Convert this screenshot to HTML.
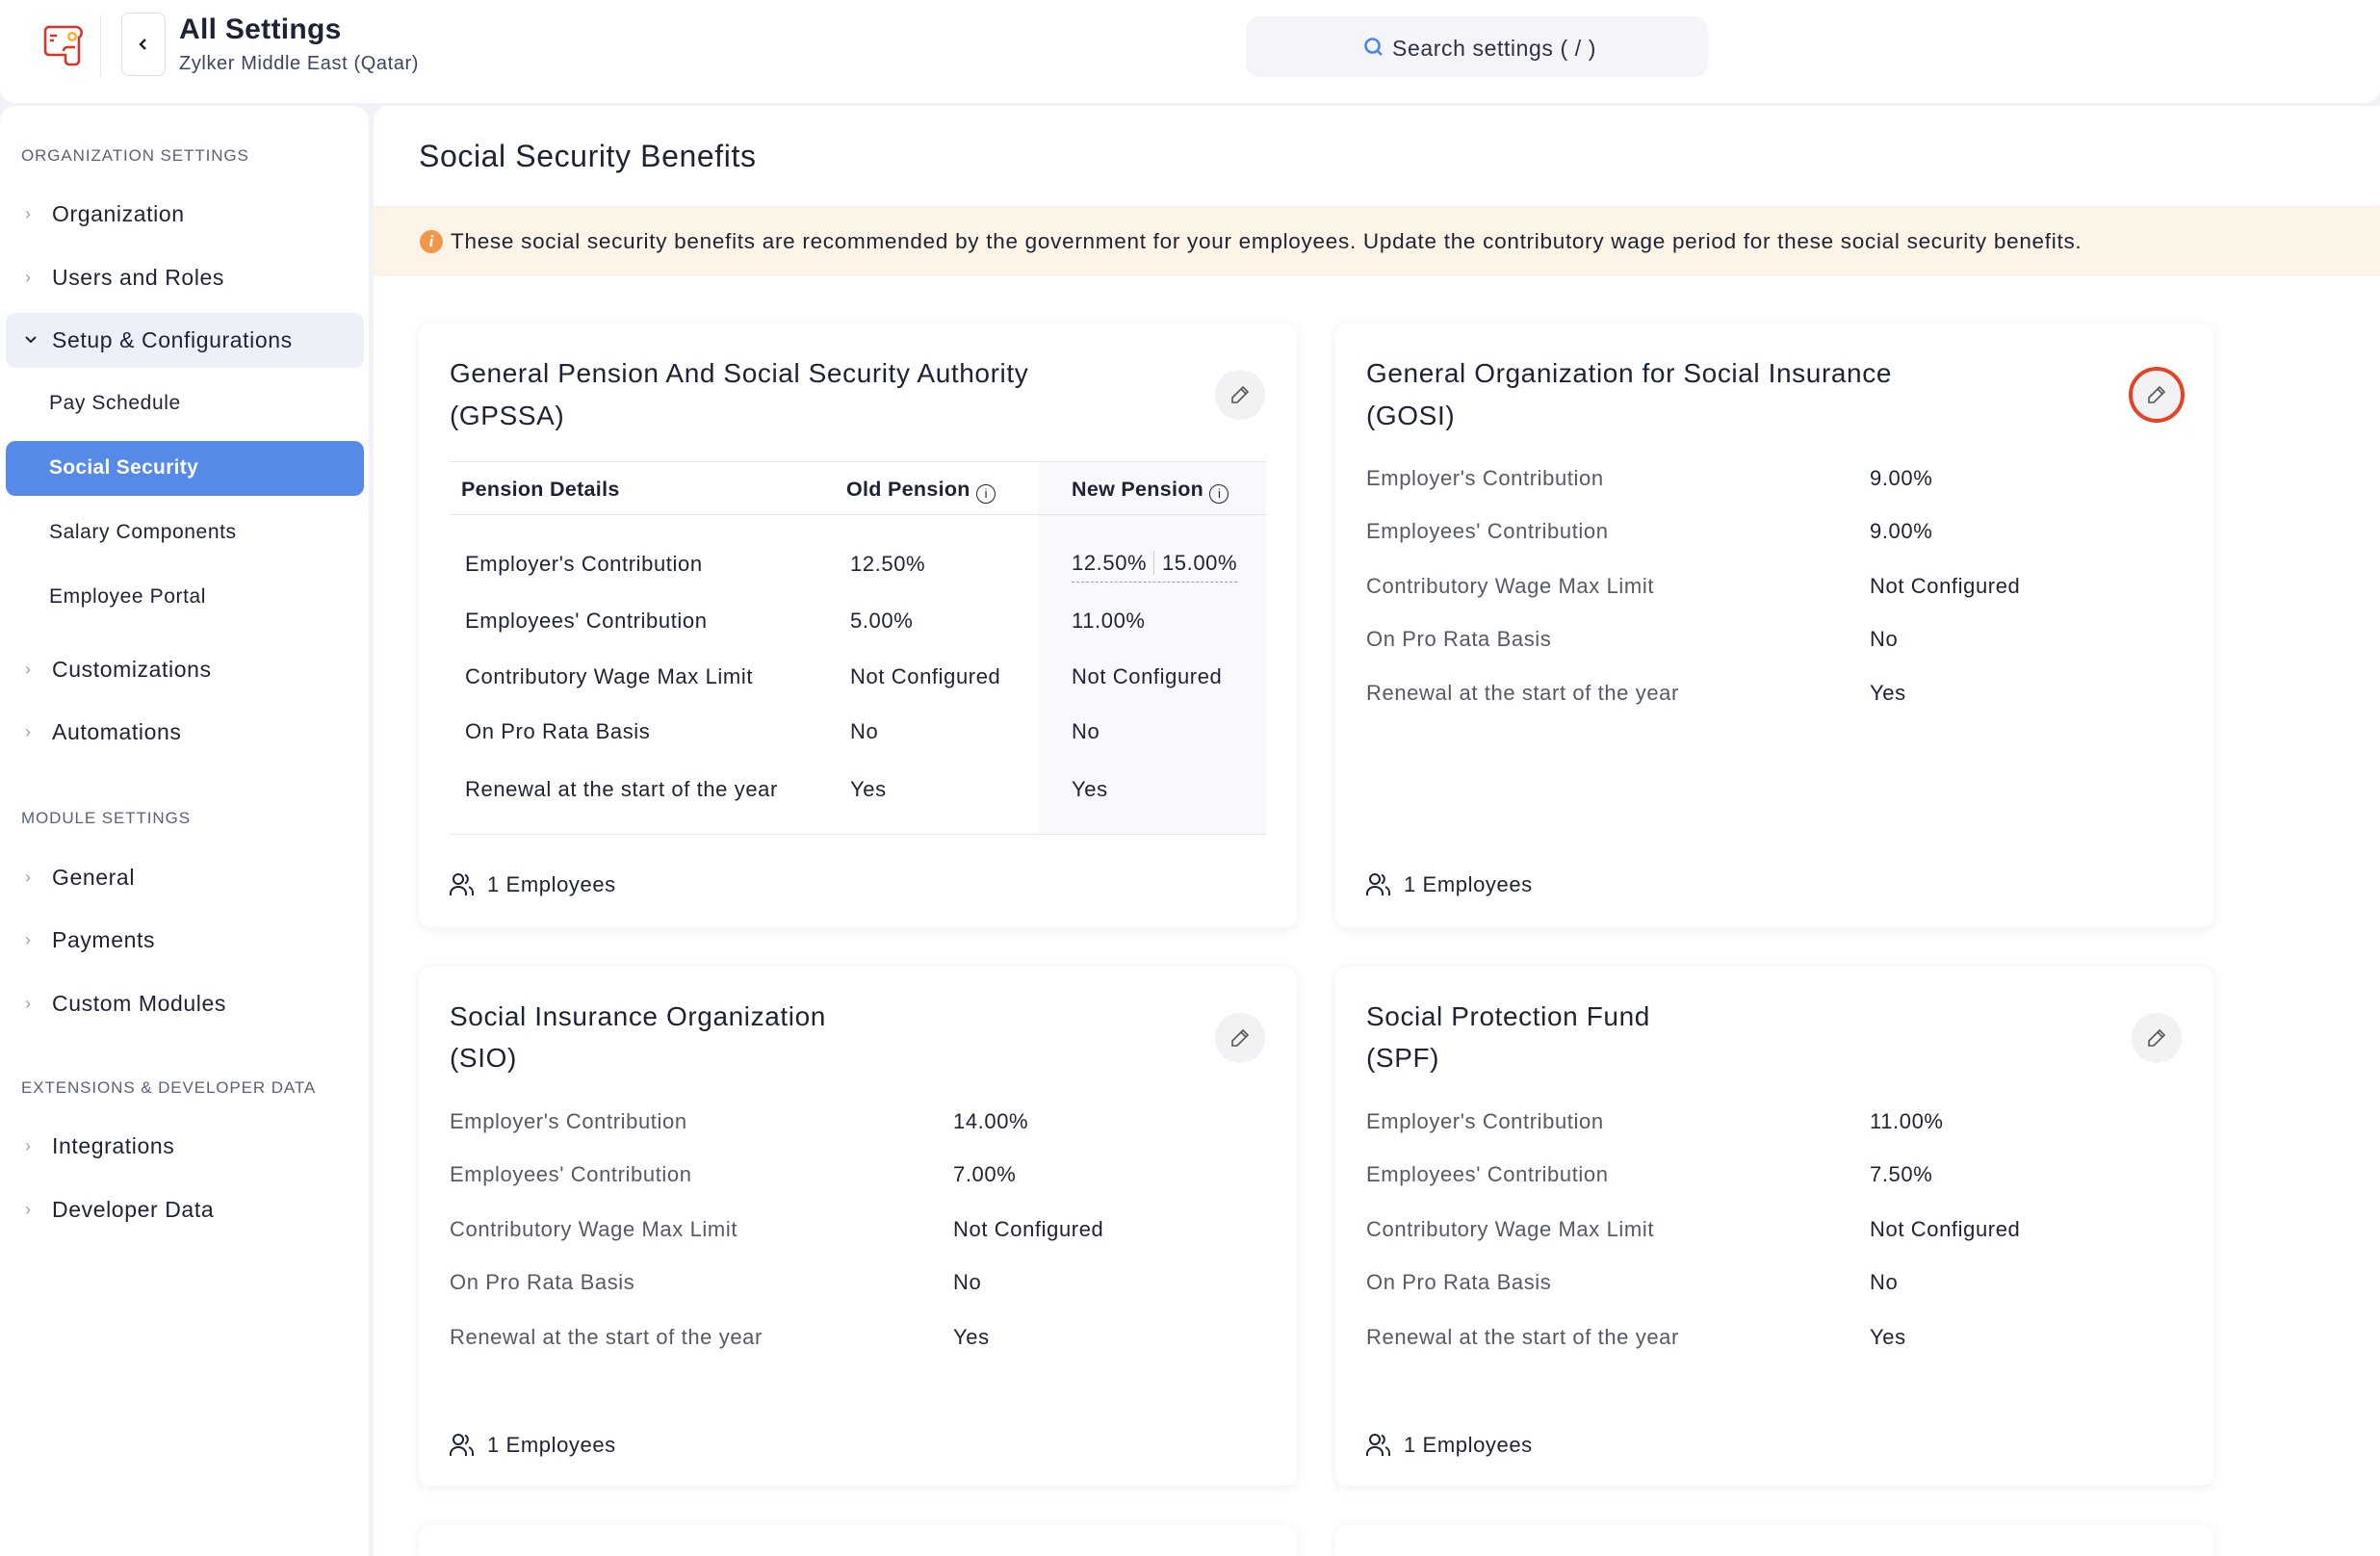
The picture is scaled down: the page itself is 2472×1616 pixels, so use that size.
<!DOCTYPE html>
<html style="overflow:hidden;width:2472px;height:1616px"><head><meta charset="utf-8"><style>
*{box-sizing:border-box;margin:0;padding:0}
body{width:2472px;height:1616px;overflow:hidden;background:#f1f2f8;font-family:"Liberation Sans",sans-serif;color:#1e2235;position:relative;letter-spacing:0.6px}
.a{position:absolute;white-space:nowrap;line-height:40px}
.hdr{position:absolute;left:0;top:0;width:2472px;height:107px;background:#fff;border-radius:0 0 16px 16px}
.side{position:absolute;left:0;top:110px;width:383px;height:1506px;background:#fff;border-radius:16px 16px 0 0}
.main{position:absolute;left:388px;top:110px;width:2084px;height:1506px;background:#fff;border-radius:16px 0 0 0}
.sec{font-size:17px;color:#5b6178;letter-spacing:0.9px}
.it{font-size:23px;color:#1e2235}
.sub{font-size:21px;color:#1e2235}
.chev{position:absolute;font-size:18px;color:#9a9eb0;line-height:40px}
.card{position:absolute;width:912px;background:#fff;border-radius:12px;box-shadow:0 2px 12px rgba(30,34,60,0.08)}
.ct{font-size:28px;color:#1e2235;line-height:44px}
.lbl{font-size:22px;color:#555a66}
.val{font-size:22px;color:#1e2235}
.tl{font-size:22px;color:#1e2235}
.edit{position:absolute;width:52px;height:52px;border-radius:50%;background:#f2f2f4}
.emp{font-size:22px;color:#1e2235}
</style></head><body>
<div class="hdr"></div>
<svg style="position:absolute;left:44px;top:26px" width="44" height="44" viewBox="0 0 44 44"><path d="M3 6 a4 4 0 0 1 4-4 h28 a6 6 0 0 1 3 11 v24 a4 4 0 0 1-4 4 h-6 a4 4 0 0 1-4-4 v-6 h-17 a4 4 0 0 1-4-4z M22 27 a4 4 0 0 1 4-4 h8" fill="none" stroke="#d8342c" stroke-width="2.6"/><path d="M8 11h7M8 16h4" stroke="#d8342c" stroke-width="2.6"/><circle cx="31" cy="12" r="3.8" fill="none" stroke="#f3b23b" stroke-width="2.6"/></svg>
<div style="position:absolute;left:104px;top:15px;width:1px;height:64px;background:#e6e7ec"></div>
<div style="position:absolute;left:126px;top:13px;width:46px;height:66px;border:1px solid #dcdee6;border-radius:8px"></div>
<svg style="position:absolute;left:142px;top:38px" width="14" height="16" viewBox="0 0 14 16"><path d="M9 3 L4 8 L9 13" fill="none" stroke="#1e2235" stroke-width="2.4"/></svg>
<div class="a" style="left:186px;top:11px;font-size:30px;font-weight:bold;color:#1e2235;letter-spacing:0.3px">All Settings</div>
<div class="a" style="left:186px;top:46px;font-size:20px;color:#3d4463">Zylker Middle East (Qatar)</div>
<div style="position:absolute;left:1294px;top:17px;width:480px;height:63px;background:#f4f4f9;border-radius:14px"></div>
<svg style="position:absolute;left:1416px;top:38px" width="22" height="22" viewBox="0 0 22 22"><circle cx="9.5" cy="9.5" r="7" fill="none" stroke="#4a86ec" stroke-width="2.6"/><path d="M14.5 14.5 L19 19" stroke="#4a86ec" stroke-width="2.6"/></svg>
<div class="a" style="left:1446px;top:30px;font-size:23px;color:#2d3148">Search settings ( / )</div>

<div class="side"></div>
<div class="main"></div>

<div class="a sec" style="left:22px;top:142px">ORGANIZATION SETTINGS</div>
<div class="chev" style="left:26px;top:202px">›</div><div class="a it" style="left:54px;top:202px">Organization</div>
<div class="chev" style="left:26px;top:268px">›</div><div class="a it" style="left:54px;top:268px">Users and Roles</div>
<div style="position:absolute;left:6px;top:325px;width:372px;height:57px;background:#eef0f9;border-radius:10px"></div>
<svg style="position:absolute;left:25px;top:348px" width="14" height="10" viewBox="0 0 14 10"><path d="M2 2 L7 7 L12 2" fill="none" stroke="#1e2235" stroke-width="2"/></svg>
<div class="a it" style="left:54px;top:333px">Setup &amp; Configurations</div>
<div class="a sub" style="left:51px;top:399px">Pay Schedule</div>
<div style="position:absolute;left:6px;top:458px;width:372px;height:57px;background:#558ae8;border-radius:10px"></div>
<div class="a sub" style="left:51px;top:466px;color:#fff;font-weight:bold;letter-spacing:0.3px">Social Security</div>
<div class="a sub" style="left:51px;top:533px">Salary Components</div>
<div class="a sub" style="left:51px;top:600px">Employee Portal</div>
<div class="chev" style="left:26px;top:675px">›</div><div class="a it" style="left:54px;top:675px">Customizations</div>
<div class="chev" style="left:26px;top:740px">›</div><div class="a it" style="left:54px;top:740px">Automations</div>
<div class="a sec" style="left:22px;top:830px">MODULE SETTINGS</div>
<div class="chev" style="left:26px;top:891px">›</div><div class="a it" style="left:54px;top:891px">General</div>
<div class="chev" style="left:26px;top:956px">›</div><div class="a it" style="left:54px;top:956px">Payments</div>
<div class="chev" style="left:26px;top:1022px">›</div><div class="a it" style="left:54px;top:1022px">Custom Modules</div>
<div class="a sec" style="left:22px;top:1110px">EXTENSIONS &amp; DEVELOPER DATA</div>
<div class="chev" style="left:26px;top:1170px">›</div><div class="a it" style="left:54px;top:1170px">Integrations</div>
<div class="chev" style="left:26px;top:1236px">›</div><div class="a it" style="left:54px;top:1236px">Developer Data</div>

<div class="a" style="left:435px;top:142px;font-size:32px;color:#1e2235">Social Security Benefits</div>
<div style="position:absolute;left:388px;top:214px;width:2084px;height:73px;background:#fcf4e6;border-top:1px solid #eee"></div>
<div style="position:absolute;left:436px;top:239px;width:24px;height:24px;border-radius:50%;background:#f0974a;color:#fff;font:italic bold 17px/24px 'Liberation Serif',serif;text-align:center;letter-spacing:0">i</div>
<div class="a" style="left:468px;top:231px;font-size:22.5px;color:#1e2235;letter-spacing:0.72px">These social security benefits are recommended by the government for your employees. Update the contributory wage period for these social security benefits.</div>

<!-- card 1 -->
<div class="card" style="left:435px;top:336px;height:627px"></div>
<div class="a ct" style="left:467px;top:366px">General Pension And Social Security Authority</div>
<div class="a ct" style="left:467px;top:410px">(GPSSA)</div>
<div class="edit" style="left:1262px;top:384px"></div>
<div style="position:absolute;left:1078px;top:479px;width:237px;height:387px;background:#f8f8fd"></div>
<div style="position:absolute;left:467px;top:479px;width:848px;height:1px;background:#e3e4e9"></div>
<div style="position:absolute;left:467px;top:534px;width:848px;height:1px;background:#e3e4e9"></div>
<div style="position:absolute;left:467px;top:866px;width:848px;height:1px;background:#e3e4e9"></div>
<div class="a tl" style="left:479px;top:488px;font-weight:bold;font-size:21.5px;letter-spacing:0.3px">Pension Details</div>
<div class="a tl" style="left:879px;top:488px;font-weight:bold;font-size:21.5px;letter-spacing:0.3px">Old Pension <span style="display:inline-block;width:20px;height:20px;border:1.6px solid #1e2235;border-radius:50%;font-size:13px;line-height:17px;text-align:center;font-weight:normal;vertical-align:-2px;letter-spacing:0">i</span></div>
<div class="a tl" style="left:1113px;top:488px;font-weight:bold;font-size:21.5px;letter-spacing:0.3px">New Pension <span style="display:inline-block;width:20px;height:20px;border:1.6px solid #1e2235;border-radius:50%;font-size:13px;line-height:17px;text-align:center;font-weight:normal;vertical-align:-2px;letter-spacing:0">i</span></div>
<div class="a tl" style="left:483px;top:566px">Employer's Contribution</div><div class="a tl" style="left:883px;top:566px">12.50%</div><div class="a tl" style="left:1113px;top:566px;border-bottom:1.5px dashed #9a9eb0;line-height:38px">12.50% <span style="border-left:1px solid #ccc;padding-left:8px">15.00%</span></div>
<div class="a tl" style="left:483px;top:625px">Employees' Contribution</div><div class="a tl" style="left:883px;top:625px">5.00%</div><div class="a tl" style="left:1113px;top:625px">11.00%</div>
<div class="a tl" style="left:483px;top:683px">Contributory Wage Max Limit</div><div class="a tl" style="left:883px;top:683px">Not Configured</div><div class="a tl" style="left:1113px;top:683px">Not Configured</div>
<div class="a tl" style="left:483px;top:740px">On Pro Rata Basis</div><div class="a tl" style="left:883px;top:740px">No</div><div class="a tl" style="left:1113px;top:740px">No</div>
<div class="a tl" style="left:483px;top:800px">Renewal at the start of the year</div><div class="a tl" style="left:883px;top:800px">Yes</div><div class="a tl" style="left:1113px;top:800px">Yes</div>

<!-- card 2 -->
<div class="card" style="left:1387px;top:336px;height:627px"></div>
<div class="a ct" style="left:1419px;top:366px">General Organization for Social Insurance</div>
<div class="a ct" style="left:1419px;top:410px">(GOSI)</div>
<div class="edit" style="border:4px solid #e64326;width:58px;height:58px;left:2211px;top:381px"></div>
<div class="a lbl" style="left:1419px;top:477px">Employer's Contribution</div><div class="a val" style="left:1942px;top:477px">9.00%</div>
<div class="a lbl" style="left:1419px;top:532px">Employees' Contribution</div><div class="a val" style="left:1942px;top:532px">9.00%</div>
<div class="a lbl" style="left:1419px;top:589px">Contributory Wage Max Limit</div><div class="a val" style="left:1942px;top:589px">Not Configured</div>
<div class="a lbl" style="left:1419px;top:644px">On Pro Rata Basis</div><div class="a val" style="left:1942px;top:644px">No</div>
<div class="a lbl" style="left:1419px;top:700px">Renewal at the start of the year</div><div class="a val" style="left:1942px;top:700px">Yes</div>

<!-- card 3 -->
<div class="card" style="left:435px;top:1004px;height:539px"></div>
<div class="a ct" style="left:467px;top:1034px">Social Insurance Organization</div>
<div class="a ct" style="left:467px;top:1077px">(SIO)</div>
<div class="edit" style="left:1262px;top:1052px"></div>
<div class="a lbl" style="left:467px;top:1145px">Employer's Contribution</div><div class="a val" style="left:990px;top:1145px">14.00%</div>
<div class="a lbl" style="left:467px;top:1200px">Employees' Contribution</div><div class="a val" style="left:990px;top:1200px">7.00%</div>
<div class="a lbl" style="left:467px;top:1257px">Contributory Wage Max Limit</div><div class="a val" style="left:990px;top:1257px">Not Configured</div>
<div class="a lbl" style="left:467px;top:1312px">On Pro Rata Basis</div><div class="a val" style="left:990px;top:1312px">No</div>
<div class="a lbl" style="left:467px;top:1369px">Renewal at the start of the year</div><div class="a val" style="left:990px;top:1369px">Yes</div>

<!-- card 4 -->
<div class="card" style="left:1387px;top:1004px;height:539px"></div>
<div class="a ct" style="left:1419px;top:1034px">Social Protection Fund</div>
<div class="a ct" style="left:1419px;top:1077px">(SPF)</div>
<div class="edit" style="left:2214px;top:1052px"></div>
<div class="a lbl" style="left:1419px;top:1145px">Employer's Contribution</div><div class="a val" style="left:1942px;top:1145px">11.00%</div>
<div class="a lbl" style="left:1419px;top:1200px">Employees' Contribution</div><div class="a val" style="left:1942px;top:1200px">7.50%</div>
<div class="a lbl" style="left:1419px;top:1257px">Contributory Wage Max Limit</div><div class="a val" style="left:1942px;top:1257px">Not Configured</div>
<div class="a lbl" style="left:1419px;top:1312px">On Pro Rata Basis</div><div class="a val" style="left:1942px;top:1312px">No</div>
<div class="a lbl" style="left:1419px;top:1369px">Renewal at the start of the year</div><div class="a val" style="left:1942px;top:1369px">Yes</div>

<!-- row 3 card tops -->
<div class="card" style="left:435px;top:1584px;height:32px;border-radius:12px 12px 0 0"></div>
<div class="card" style="left:1387px;top:1584px;height:32px;border-radius:12px 12px 0 0"></div>

<!-- edit icons -->
<svg style="position:absolute;left:1276px;top:398px" width="24" height="24" viewBox="0 0 24 24"><path d="M15 4 L20 9 L9 20 L4 20 L4 15 Z M13 6 L18 11" fill="none" stroke="#555" stroke-width="1.6"/></svg>
<svg style="position:absolute;left:2228px;top:398px" width="24" height="24" viewBox="0 0 24 24"><path d="M15 4 L20 9 L9 20 L4 20 L4 15 Z M13 6 L18 11" fill="none" stroke="#555" stroke-width="1.6"/></svg>
<svg style="position:absolute;left:1276px;top:1066px" width="24" height="24" viewBox="0 0 24 24"><path d="M15 4 L20 9 L9 20 L4 20 L4 15 Z M13 6 L18 11" fill="none" stroke="#555" stroke-width="1.6"/></svg>
<svg style="position:absolute;left:2228px;top:1066px" width="24" height="24" viewBox="0 0 24 24"><path d="M15 4 L20 9 L9 20 L4 20 L4 15 Z M13 6 L18 11" fill="none" stroke="#555" stroke-width="1.6"/></svg>

<!-- employees -->
<svg style="position:absolute;left:466px;top:906px" width="28" height="26" viewBox="0 0 28 26"><circle cx="10" cy="7" r="5" fill="none" stroke="#1e2235" stroke-width="2"/><path d="M2 24 v-2 a8 7 0 0 1 16 0 v2 M17 2.5 a5 5 0 0 1 0 9 M21 15 a7 7 0 0 1 4 7 v2" fill="none" stroke="#1e2235" stroke-width="2"/></svg>
<div class="a emp" style="left:506px;top:899px">1 Employees</div>
<svg style="position:absolute;left:1418px;top:906px" width="28" height="26" viewBox="0 0 28 26"><circle cx="10" cy="7" r="5" fill="none" stroke="#1e2235" stroke-width="2"/><path d="M2 24 v-2 a8 7 0 0 1 16 0 v2 M17 2.5 a5 5 0 0 1 0 9 M21 15 a7 7 0 0 1 4 7 v2" fill="none" stroke="#1e2235" stroke-width="2"/></svg>
<div class="a emp" style="left:1458px;top:899px">1 Employees</div>
<svg style="position:absolute;left:466px;top:1488px" width="28" height="26" viewBox="0 0 28 26"><circle cx="10" cy="7" r="5" fill="none" stroke="#1e2235" stroke-width="2"/><path d="M2 24 v-2 a8 7 0 0 1 16 0 v2 M17 2.5 a5 5 0 0 1 0 9 M21 15 a7 7 0 0 1 4 7 v2" fill="none" stroke="#1e2235" stroke-width="2"/></svg>
<div class="a emp" style="left:506px;top:1481px">1 Employees</div>
<svg style="position:absolute;left:1418px;top:1488px" width="28" height="26" viewBox="0 0 28 26"><circle cx="10" cy="7" r="5" fill="none" stroke="#1e2235" stroke-width="2"/><path d="M2 24 v-2 a8 7 0 0 1 16 0 v2 M17 2.5 a5 5 0 0 1 0 9 M21 15 a7 7 0 0 1 4 7 v2" fill="none" stroke="#1e2235" stroke-width="2"/></svg>
<div class="a emp" style="left:1458px;top:1481px">1 Employees</div>
</body></html>
